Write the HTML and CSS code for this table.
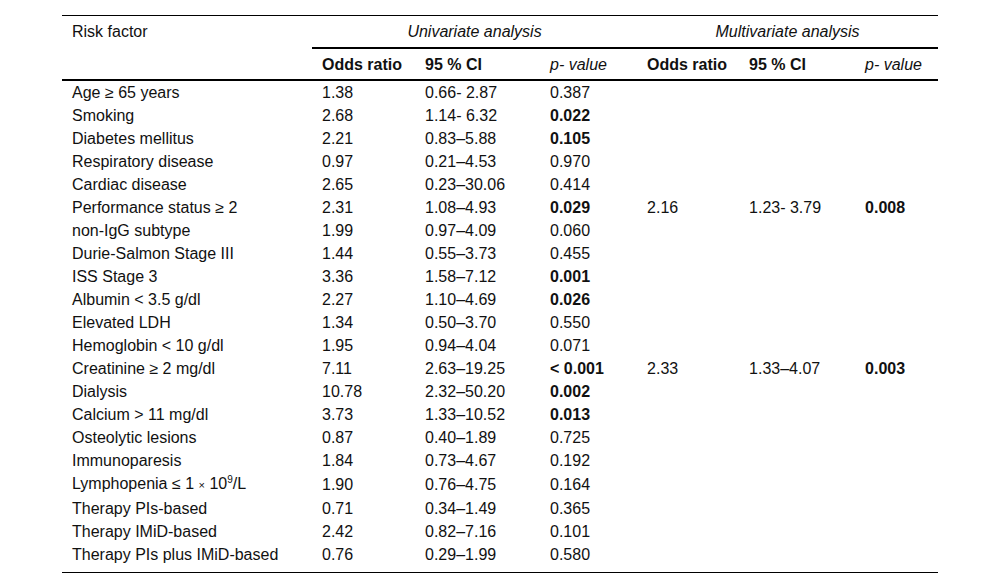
FILE: index.html
```html
<!DOCTYPE html>
<html>
<head>
<meta charset="utf-8">
<link rel="stylesheet" href="styles.css">
</head>
<body>
<table class="data">
  <colgroup>
    <col class="c1"><col class="c2"><col class="c3"><col class="c4"><col class="c5"><col class="c6"><col class="c7">
  </colgroup>
  <thead>
    <tr class="group">
      <th class="rf">Risk factor</th>
      <th colspan="3" class="grp">Univariate analysis</th>
      <th colspan="3" class="grp">Multivariate analysis</th>
    </tr>
    <tr class="sub">
      <th></th>
      <th class="b">Odds ratio</th>
      <th class="b">95 % CI</th>
      <th class="i">p- value</th>
      <th class="b">Odds ratio</th>
      <th class="b">95 % CI</th>
      <th class="i">p- value</th>
    </tr>
  </thead>
  <tbody>
    <tr><td>Age ≥ 65 years</td><td>1.38</td><td>0.66- 2.87</td><td>0.387</td><td></td><td></td><td></td></tr>
    <tr><td>Smoking</td><td>2.68</td><td>1.14- 6.32</td><td class="b">0.022</td><td></td><td></td><td></td></tr>
    <tr><td>Diabetes mellitus</td><td>2.21</td><td>0.83–5.88</td><td class="b">0.105</td><td></td><td></td><td></td></tr>
    <tr><td>Respiratory disease</td><td>0.97</td><td>0.21–4.53</td><td>0.970</td><td></td><td></td><td></td></tr>
    <tr><td>Cardiac disease</td><td>2.65</td><td>0.23–30.06</td><td>0.414</td><td></td><td></td><td></td></tr>
    <tr><td>Performance status ≥ 2</td><td>2.31</td><td>1.08–4.93</td><td class="b">0.029</td><td>2.16</td><td>1.23- 3.79</td><td class="b">0.008</td></tr>
    <tr><td>non-IgG subtype</td><td>1.99</td><td>0.97–4.09</td><td>0.060</td><td></td><td></td><td></td></tr>
    <tr><td>Durie-Salmon Stage III</td><td>1.44</td><td>0.55–3.73</td><td>0.455</td><td></td><td></td><td></td></tr>
    <tr><td>ISS Stage 3</td><td>3.36</td><td>1.58–7.12</td><td class="b">0.001</td><td></td><td></td><td></td></tr>
    <tr><td>Albumin &lt; 3.5 g/dl</td><td>2.27</td><td>1.10–4.69</td><td class="b">0.026</td><td></td><td></td><td></td></tr>
    <tr><td>Elevated LDH</td><td>1.34</td><td>0.50–3.70</td><td>0.550</td><td></td><td></td><td></td></tr>
    <tr><td>Hemoglobin &lt; 10 g/dl</td><td>1.95</td><td>0.94–4.04</td><td>0.071</td><td></td><td></td><td></td></tr>
    <tr><td>Creatinine ≥ 2 mg/dl</td><td>7.11</td><td>2.63–19.25</td><td class="b">&lt; 0.001</td><td>2.33</td><td>1.33–4.07</td><td class="b">0.003</td></tr>
    <tr><td>Dialysis</td><td>10.78</td><td>2.32–50.20</td><td class="b">0.002</td><td></td><td></td><td></td></tr>
    <tr><td>Calcium &gt; 11 mg/dl</td><td>3.73</td><td>1.33–10.52</td><td class="b">0.013</td><td></td><td></td><td></td></tr>
    <tr><td>Osteolytic lesions</td><td>0.87</td><td>0.40–1.89</td><td>0.725</td><td></td><td></td><td></td></tr>
    <tr><td>Immunoparesis</td><td>1.84</td><td>0.73–4.67</td><td>0.192</td><td></td><td></td><td></td></tr>
    <tr><td>Lymphopenia ≤ 1 <span class="times">×</span> 10<sup>9</sup>/L</td><td>1.90</td><td>0.76–4.75</td><td>0.164</td><td></td><td></td><td></td></tr>
    <tr><td>Therapy PIs-based</td><td>0.71</td><td>0.34–1.49</td><td>0.365</td><td></td><td></td><td></td></tr>
    <tr><td>Therapy IMiD-based</td><td>2.42</td><td>0.82–7.16</td><td>0.101</td><td></td><td></td><td></td></tr>
    <tr class="last"><td>Therapy PIs plus IMiD-based</td><td>0.76</td><td>0.29–1.99</td><td>0.580</td><td></td><td></td><td></td></tr>
  </tbody>
</table>
</body>
</html>
```

FILE: styles.css
```css
html, body {
  margin: 0;
  padding: 0;
  background: #fff;
}
body {
  padding-top: 15px;
  font-family: "Liberation Sans", Arial, sans-serif;
  font-size: 16px;
  color: #111;
}
.data {
  margin-left: 62px;
  width: 876px;
  table-layout: fixed;
  border-collapse: separate;
  border-spacing: 0;
  border-top: 1px solid #000;
  border-bottom: 1px solid #000;
}
.c1 { width: 250px; }
.c2 { width: 103px; }
.c3 { width: 125px; }
.c4 { width: 97px; }
.c5 { width: 102px; }
.c6 { width: 116px; }
.c7 { width: 83px; }

.data th, .data td {
  padding: 0 0 0 10px;
  text-align: left;
  font-weight: normal;
  line-height: 23px;
  vertical-align: middle;
  white-space: nowrap;
}
.data tbody tr { height: 23px; }
.group th {
  padding-top: 4px;
  padding-bottom: 4px;
  border-bottom: 2px solid #000;
}
.group th.rf {
  border-bottom-color: transparent;
}
.group th.grp {
  text-align: center;
  font-style: italic;
  padding-left: 0;
}
.sub th {
  padding-top: 4px;
  padding-bottom: 3px;
  border-bottom: 2px solid #000;
}
.data .b { font-weight: bold; }
.data .i { font-style: italic; }
.data .last td { padding-bottom: 6px; }
.times { font-size: 11px; }
sup {
  font-size: 10px;
  line-height: 0;
  vertical-align: 6px;
}
```
